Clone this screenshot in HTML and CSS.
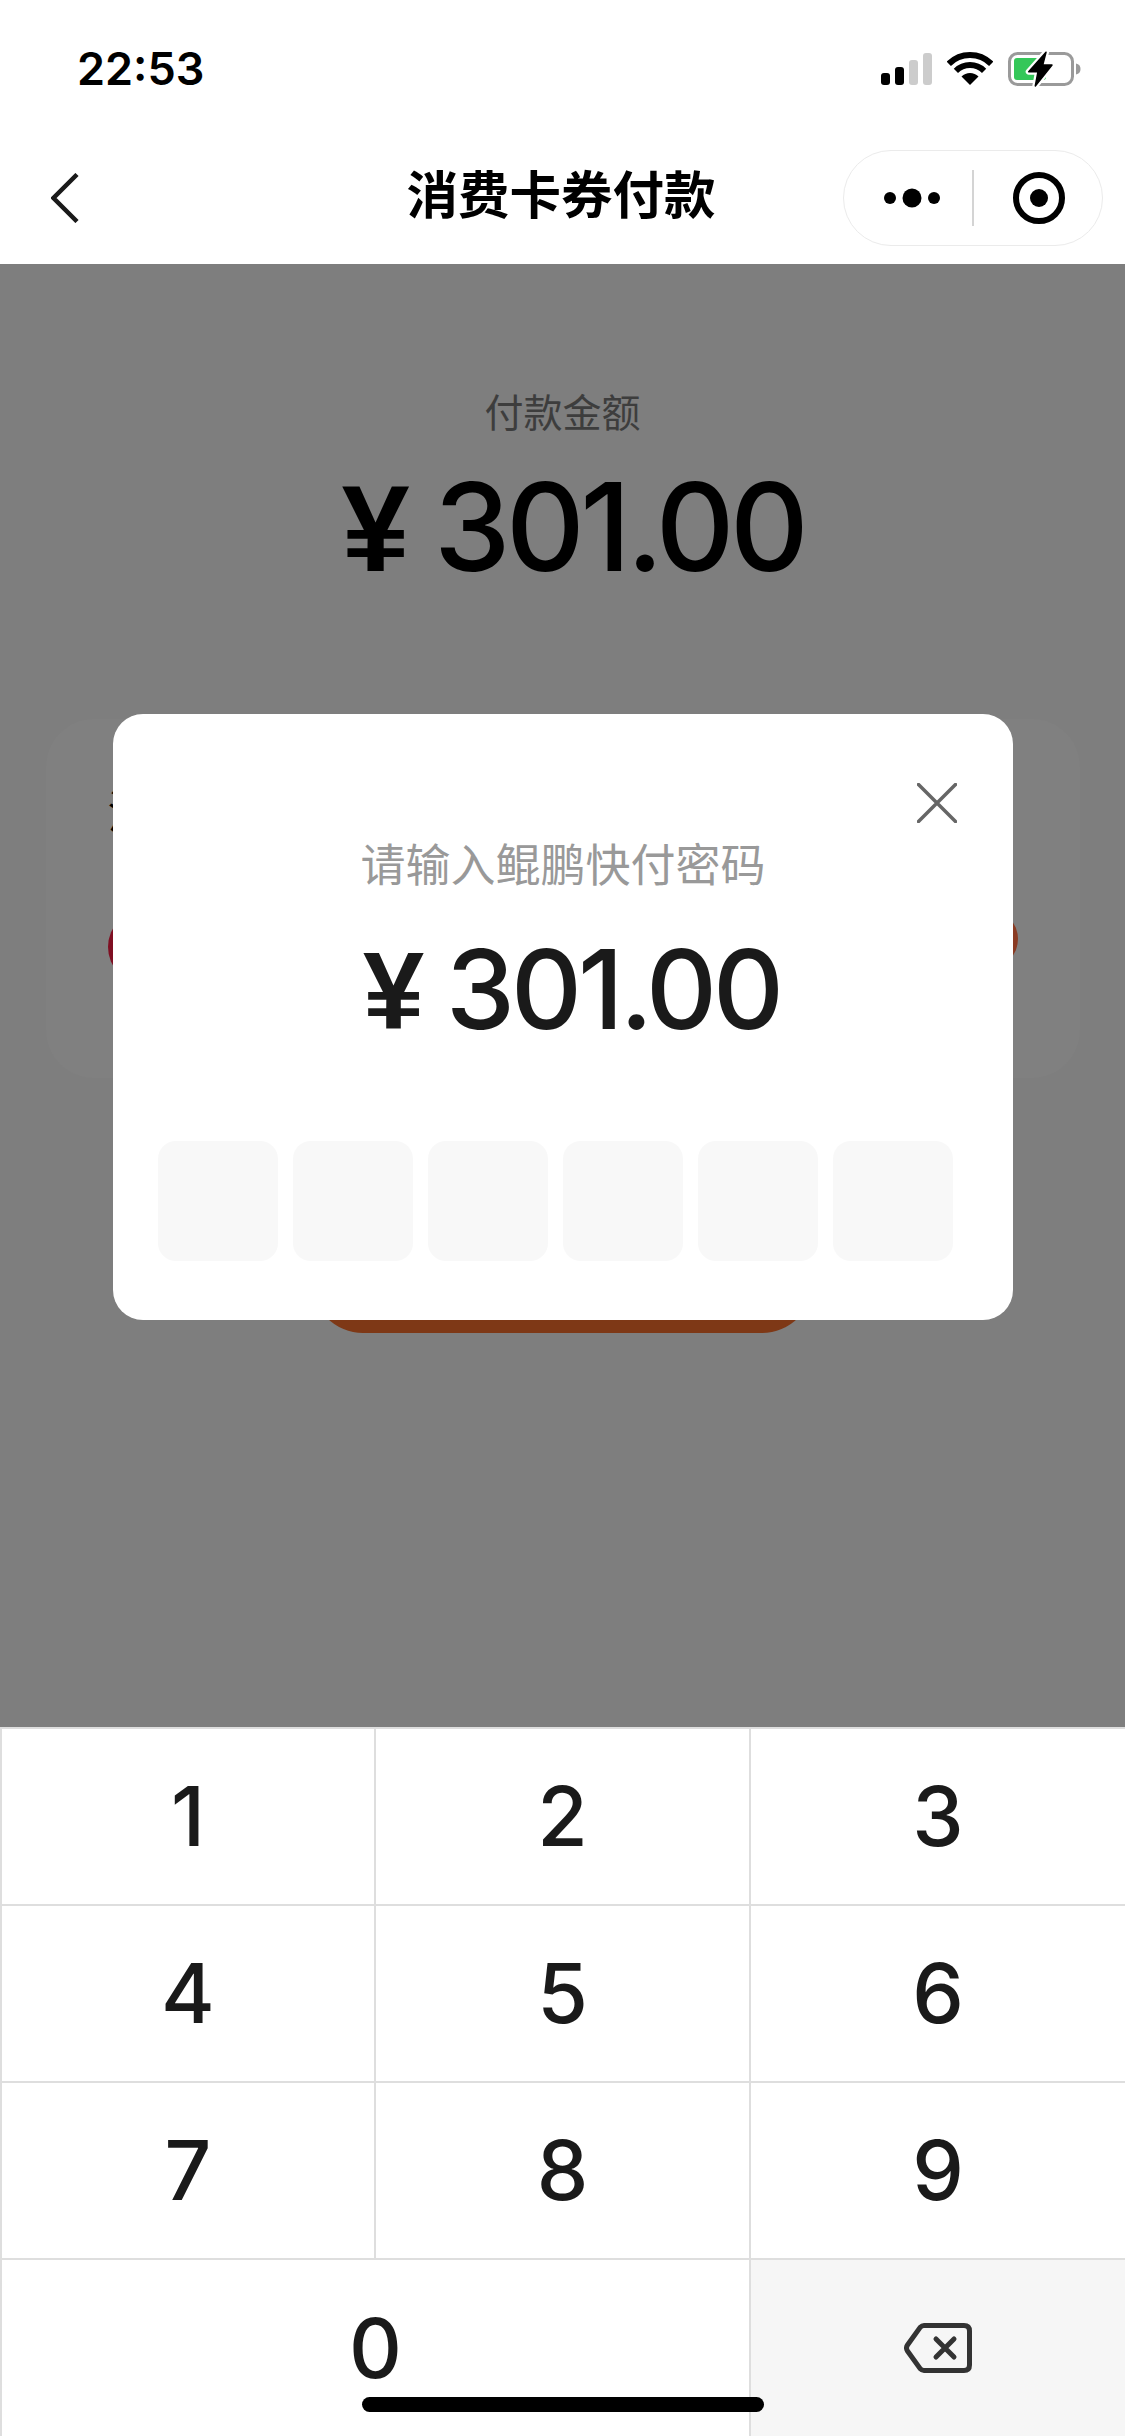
FILE: index.html
```html
<!DOCTYPE html>
<html lang="zh">
<head>
<meta charset="utf-8">
<title>消费卡券付款</title>
<link rel="stylesheet" href="styles.css">
</head>
<body>
<div class="page">
  <header class="top">
    <div class="status">
      <span class="time">22:53</span>
      <div class="status-icons">
        <div class="signal"><i class="b1"></i><i class="b2"></i><i class="b3"></i><i class="b4"></i></div>
        <svg class="wifi" width="46" height="34" viewBox="0 0 46 34"><path d="M1.800 12.800A30 30 0 0 1 44.200 12.800" fill="none" stroke="#000" stroke-width="6"/><path d="M8.900 19.900A20 20 0 0 1 37.100 19.900" fill="none" stroke="#000" stroke-width="6"/><path d="M23 34L14.500 25.500A12 12 0 0 1 31.500 25.500Z" fill="#000"/></svg>
        <svg class="battery" width="75" height="40" viewBox="0 0 75 40"><rect x="1.500" y="3.500" width="63" height="31" rx="8" fill="none" stroke="#9a9a9a" stroke-width="3"/><path d="M68 13.500C71 14 72.500 16 72.500 19S71 24 68 24.500Z" fill="#9a9a9a"/><rect x="6" y="8" width="32" height="22" rx="3" fill="#34c759"/><path d="M38 2.300L20.700 21.700H30L27.300 36L44 15H34.700Z" fill="none" stroke="#fff" stroke-width="6" stroke-linejoin="round"/><path d="M38 2.300L20.700 21.700H30L27.300 36L44 15H34.700Z" fill="#000" stroke="#000" stroke-width="1.500" stroke-linejoin="round"/></svg>
      </div>
    </div>
    <nav class="nav">
      <svg class="back" width="28" height="50" viewBox="0 0 28 50"><path d="M26 1.500L2.500 25L26 48.500" fill="none" stroke="#1a1a1a" stroke-width="4.500"/></svg>
      <h1 class="title">消费卡券付款</h1>
      <div class="capsule">
        <svg class="dots" width="68" height="20" viewBox="0 0 68 20"><circle cx="7" cy="10" r="6" fill="#000"/><circle cx="29" cy="10" r="9.500" fill="#000"/><circle cx="51" cy="10" r="6" fill="#000"/></svg>
        <span class="divider"></span>
        <svg class="target" width="52" height="52" viewBox="0 0 52 52"><circle cx="26" cy="26" r="23" fill="none" stroke="#000" stroke-width="6"/><circle cx="26" cy="26" r="9" fill="#000"/></svg>
      </div>
    </nav>
  </header>

  <main class="main">
    <p class="label">付款金额</p>
    <p class="amount"><span class="yen">¥</span>301.00</p>
    <section class="card">
      <h2 class="card-title">消费卡</h2>
      <div class="card-row">
        <span class="dot-red"></span>
        <span class="dot-brown"></span>
      </div>
    </section>
    <div class="pay-btn"></div>

    <div class="modal">
      <svg class="close" width="40" height="40" viewBox="0 0 40 40"><path d="M1.500 1.500L38.500 38.500M38.500 1.500L1.500 38.500" stroke="#666" stroke-width="3.500" stroke-linecap="round"/></svg>
      <p class="modal-label">请输入鲲鹏快付密码</p>
      <p class="modal-amount"><span class="yen">¥</span>301.00</p>
      <div class="pin">
        <span></span><span></span><span></span><span></span><span></span><span></span>
      </div>
    </div>
  </main>

  <section class="keys">
    <button class="key">1</button>
    <button class="key">2</button>
    <button class="key">3</button>
    <button class="key">4</button>
    <button class="key">5</button>
    <button class="key">6</button>
    <button class="key">7</button>
    <button class="key">8</button>
    <button class="key">9</button>
    <button class="key zero">0</button>
    <button class="key del" aria-label="删除">
      <svg width="68" height="50" viewBox="0 0 68 50"><path d="M20 2.500H60Q65.500 2.500 65.500 8V42Q65.500 47.500 60 47.500H20Q18 47.500 16 45.500L3.500 28Q1.500 25 3.500 22L16 4.500Q18 2.500 20 2.500Z" fill="none" stroke="#333" stroke-width="5"/><path d="M32 16L50 34M50 16L32 34" stroke="#333" stroke-width="5" stroke-linecap="round"/></svg>
    </button>
  </section>
  <div class="home-bar"></div>
</div>
</body>
</html>
```

FILE: styles.css
```css
* { box-sizing: border-box; }
html, body { margin: 0; padding: 0; background: #fff; }
body { font-family: Inter, "Noto Sans CJK SC", sans-serif; }
p, h1, h2 { margin: 0; font-weight: 400; }

.page {
  position: relative;
  width: 1125px;
  height: 2436px;
  display: flex;
  flex-direction: column;
  overflow: hidden;
}

.top { background: #fff; height: 264px; flex: none; }
.status {
  height: 132px;
  display: flex;
  align-items: flex-start;
  justify-content: space-between;
  padding: 42px 42px 0 77px;
}
.time { font-size: 45px; font-weight: 600; line-height: 54px; color: #000; }
.status-icons { display: flex; align-items: flex-start; padding-top: 8px; }
.signal { display: flex; align-items: flex-end; gap: 5px; height: 35px; margin-right: 15px; }
.signal i { display: block; width: 9px; border-radius: 3px; background: #000; }
.signal .b1 { height: 12px; }
.signal .b2 { height: 18px; }
.signal .b3 { height: 25px; background: #ccc; }
.signal .b4 { height: 32px; background: #ccc; }
.wifi { margin: 1px 15px 0 0; }
.battery { display: block; }

.nav {
  position: relative;
  height: 132px;
  display: flex;
  align-items: center;
  justify-content: space-between;
  padding: 0 22px 0 51px;
}
.back { display: block; }
.title {
  position: absolute;
  left: 0;
  right: 3px;
  top: 30px;
  text-align: center;
  font: 700 51.500px/60px "Noto Sans CJK SC", sans-serif;
  color: #000;
}
.capsule {
  width: 260px;
  height: 96px;
  border: 1.500px solid #ebebeb;
  border-radius: 48px;
  display: flex;
  align-items: center;
  padding-left: 39px;
}
.divider { width: 1.500px; height: 56px; background: #d4d4d4; margin: 0 39px 0 21px; }
.target { display: block; }

.main {
  position: relative;
  flex: 1;
  background: #7e7e7e;
  padding-top: 121px;
  display: flex;
  flex-direction: column;
  align-items: center;
}
.label {
  font: 400 39px/50px "Noto Sans CJK SC", sans-serif;
  color: #3d3d3d;
}
.amount {
  font-size: 122px;
  font-weight: 500;
  line-height: 140px;
  letter-spacing: -4.500px;
  color: #000;
  margin-top: 22px;
  padding-left: 21px;
  white-space: pre;
}
.yen {
  font-family: "Liberation Sans", sans-serif;
  font-weight: 700;
  letter-spacing: 0;
  margin-right: 0.2em;
}
.card {
  width: 1034px;
  height: 359px;
  margin-top: 120px;
  background: #808080;
  border-radius: 48px;
  padding: 64px 62px 0;
}
.card-title { font: 400 45px/54px "Noto Sans CJK SC", sans-serif; color: #000; }
.card-row { display: flex; justify-content: space-between; align-items: flex-start; margin-top: 72px; }
.dot-red { width: 76px; height: 76px; border-radius: 50%; background: #7f0f22; }
.dot-brown { width: 60px; height: 60px; border-radius: 50%; background: #8a3a22; }
.pay-btn {
  width: 501px;
  height: 102px;
  margin-top: 153px;
  background: #7e3816;
  border-radius: 51px;
}

.modal {
  position: absolute;
  left: 113px;
  top: 450px;
  width: 900px;
  height: 606px;
  background: #fff;
  border-radius: 30px;
  padding: 122px 60px 0 45px;
  display: flex;
  flex-direction: column;
}
.close { position: absolute; right: 56px; top: 69px; }
.modal-label {
  font: 400 45px/54px "Noto Sans CJK SC", sans-serif;
  color: #999;
  text-align: center;
  padding-left: 15px;
}
.modal-amount {
  font-size: 110px;
  font-weight: 500;
  line-height: 126px;
  letter-spacing: -4px;
  color: #1a1a1a;
  text-align: center;
  padding-left: 32px;
  margin-top: 36px;
  white-space: pre;
}
.pin { display: flex; gap: 15px; margin-top: 87px; }
.pin span { width: 120px; height: 120px; border-radius: 18px; background: #f8f8f8; }

.keys {
  flex: none;
  height: 709px;
  display: grid;
  grid-template-columns: 374px 375px 1fr;
  grid-template-rows: repeat(3, 177px) 178px;
  background: #fff;
  border-bottom: 1.500px solid #dedede;
}
.key {
  border: 0;
  border-top: 2px solid #dedede;
  border-left: 2px solid #dedede;
  background: #fff;
  padding: 0;
  font-family: Inter, sans-serif;
  font-size: 82px;
  font-weight: 500;
  color: #1a1a1a;
  display: flex;
  align-items: center;
  justify-content: center;
}
.zero { grid-column: span 2; }
.del { background: #f6f6f6; }
.del svg { display: block; }

.home-bar {
  position: absolute;
  left: 362px;
  top: 2397px;
  width: 402px;
  height: 15px;
  border-radius: 8px;
  background: #000;
}
```
